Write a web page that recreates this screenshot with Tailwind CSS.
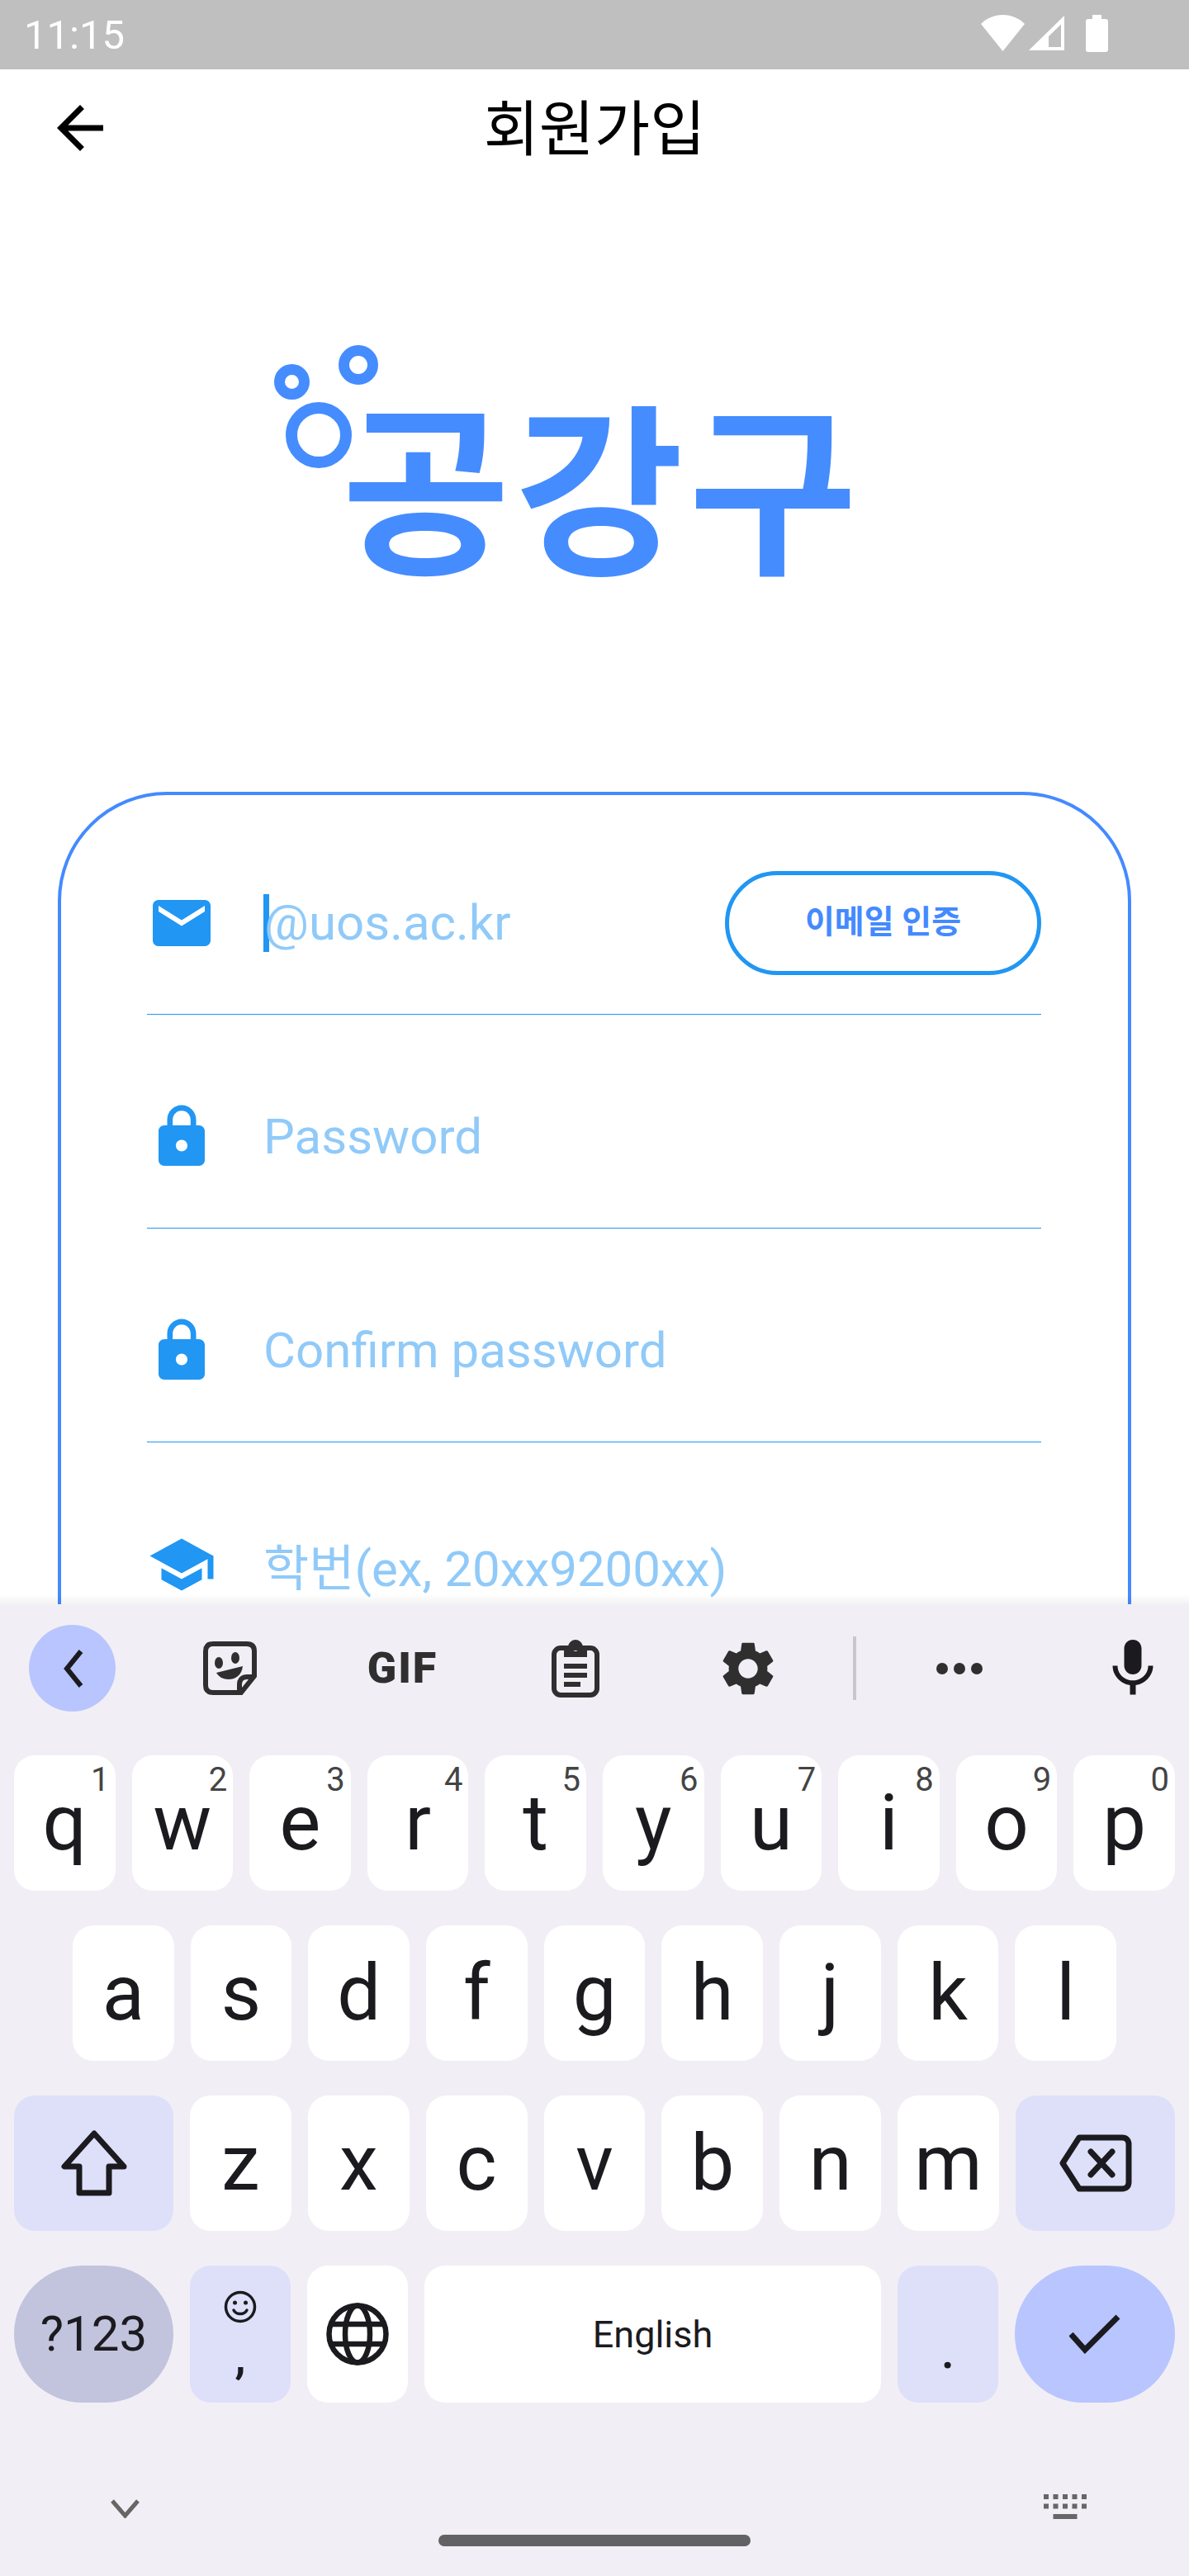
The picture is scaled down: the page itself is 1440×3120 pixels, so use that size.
<!DOCTYPE html>
<html lang="ko">
  <head>
    <meta charset="UTF-8" />
    <meta name="viewport" content="width=device-width, initial-scale=1.0" />
    <title>회원가입</title>
    <script src="https://cdn.jsdelivr.net/npm/@tailwindcss/browser@4"></script>
  </head>
  <body class="bg-white font-['Roboto','Noto_Sans_CJK_KR',sans-serif]">
    <div class="w-[1440px] h-[3120px] flex flex-col overflow-hidden">
      <!-- Status bar -->
      <div class="h-[84px] shrink-0 bg-[#bfbfbf] flex items-center pl-[29px] pr-[98px] text-white">
        <span class="text-[49px] leading-none">11:15</span>
        <div class="ml-auto flex items-start h-[46px] mt-[-3px]">
          <svg class="w-[53px] h-[44px]" viewBox="0 0 53 44" fill="#fff"><path d="M26.5 44L0 11C7 4 16 0 26.5 0S46 4 53 11z" /></svg>
          <svg class="w-[43px] h-[44px] ml-[5px]" viewBox="0 0 43 44" fill="#fff"><path fill-rule="evenodd" d="M43 1V43H0zM39 11.500V39H24V26z" /></svg>
          <svg class="w-[27px] h-[46px] ml-[26px]" viewBox="0 0 27 46" fill="#fff"><path d="M8 0H19V5H24C26 5 27 6 27 8V42C27 44 26 45 24 45H3C1 45 0 44 0 42V8C0 6 1 5 3 5H8z" /></svg>
        </div>
      </div>

      <!-- Form page -->
      <div class="relative flex-1 overflow-hidden">
        <header class="relative h-[142px] flex items-center justify-center">
          <svg class="absolute left-[55px] top-[29px] w-[84px] h-[84px]" viewBox="0 0 24 24" fill="#000"><path d="M20 11H7.830l5.590-5.590L12 4l-8 8 8 8 1.410-1.410L7.830 13H20v-2z" /></svg>
          <h1 class="text-[73px] leading-none text-black mt-[4px]">회원가입</h1>
        </header>

        <!-- Logo -->
        <div class="relative h-[733px] flex justify-center pl-[18px] pt-[265px]">
          <span class="text-[222px] leading-none font-bold text-[#458cff] tracking-[6px]">공강구</span>
          <div class="absolute left-[346px] top-[261px] w-[80px] h-[80px] rounded-full border-[14px] border-[#458cff]"></div>
          <div class="absolute left-[410px] top-[192px] w-[48px] h-[48px] rounded-full border-[13px] border-[#458cff]"></div>
          <div class="absolute left-[332px] top-[215px] w-[43px] h-[43px] rounded-full border-[13px] border-[#458cff]"></div>
        </div>

        <!-- Sign up card -->
        <div class="mx-[70px] h-[1400px] rounded-[132px] border-[4px] border-[#448aff] pt-[44px] pl-[104px] pr-[105px] flex flex-col gap-[37px]">
          <div class="relative h-[222px] shrink-0 flex items-center border-b border-[#2196f3]">
            <svg class="w-[84px] h-[84px]" viewBox="0 0 24 24" fill="#2196f3"><path d="M20 4H4c-1.100 0-1.990.900-1.990 2L2 18c0 1.100.900 2 2 2h16c1.100 0 2-.900 2-2V6c0-1.100-.900-2-2-2zm0 4l-8 5-8-5V6l8 5 8-5v2z" /></svg>
            <div class="w-[7px] h-[70px] bg-[#2196f3] ml-[57px]"></div>
            <span class="text-[60px] leading-none text-[#90caf9] ml-[-6px]">@uos.ac.kr</span>
            <button class="ml-auto w-[383px] h-[126px] rounded-full border-[5px] border-[#2196f3] text-[#448aff] text-[39px] leading-none font-bold">이메일 인증</button>
          </div>
          <div class="h-[222px] shrink-0 flex items-center border-b border-[#2196f3]">
            <svg class="w-[84px] h-[84px]" viewBox="0 0 24 24" fill="#2196f3"><path d="M18 8h-1V6c0-2.760-2.240-5-5-5S7 3.240 7 6v2H6c-1.100 0-2 .900-2 2v10c0 1.100.900 2 2 2h12c1.100 0 2-.900 2-2V10c0-1.100-.900-2-2-2zm-6 9c-1.100 0-2-.900-2-2s.900-2 2-2 2 .900 2 2-.900 2-2 2zm3.100-9H8.900V6c0-1.710 1.390-3.100 3.100-3.100 1.710 0 3.100 1.390 3.100 3.100v2z" /></svg>
            <span class="text-[60px] leading-none text-[#90caf9] ml-[57px]">Password</span>
          </div>
          <div class="h-[222px] shrink-0 flex items-center border-b border-[#2196f3]">
            <svg class="w-[84px] h-[84px]" viewBox="0 0 24 24" fill="#2196f3"><path d="M18 8h-1V6c0-2.760-2.240-5-5-5S7 3.240 7 6v2H6c-1.100 0-2 .900-2 2v10c0 1.100.900 2 2 2h12c1.100 0 2-.900 2-2V10c0-1.100-.900-2-2-2zm-6 9c-1.100 0-2-.900-2-2s.900-2 2-2 2 .900 2 2-.900 2-2 2zm3.100-9H8.900V6c0-1.710 1.390-3.100 3.100-3.100 1.710 0 3.100 1.390 3.100 3.100v2z" /></svg>
            <span class="text-[60px] leading-none text-[#90caf9] ml-[57px]">Confirm password</span>
          </div>
          <div class="h-[222px] shrink-0 flex items-center">
            <svg class="w-[84px] h-[84px]" viewBox="0 0 24 24" fill="#2196f3"><path d="M5 13.180v4L12 21l7-3.820v-4L12 17l-7-3.820zM12 3L1 9l11 6 9-4.910V17h2V9L12 3z" /></svg>
            <span class="text-[60px] leading-none text-[#90caf9] ml-[57px] mt-[12px]">학번(ex, 20xx9200xx)</span>
          </div>
        </div>

        <!-- soft edge above the keyboard -->
        <div class="absolute left-0 right-0 bottom-0 h-[12px] bg-gradient-to-b from-transparent to-black/5"></div>
      </div>

      <!-- Keyboard -->
      <div class="h-[1177px] shrink-0 bg-[#f1eff5] text-[#1b1b1f] flex flex-col">
        <!-- Toolbar -->
        <div class="h-[183px] shrink-0 flex items-center pl-[35px] pb-[28px]">
          <div class="w-[105px] h-[105px] rounded-full bg-[#b8c5ff] flex items-center justify-center">
            <svg class="w-[40px] h-[50px]" viewBox="0 0 40 50" fill="none" stroke="#1b1b1f" stroke-width="6"><path d="M30 4L13 25L30 46" /></svg>
          </div>
          <div class="w-[33px]"></div>
          <div class="w-[210px] flex justify-center">
            <svg class="w-[65px] h-[65px]" viewBox="0 0 65 65" fill="none" stroke="#2f2f2f" stroke-width="6">
              <path d="M12 3H53C59 3 62 6 62 12V42L46 62H12C6 62 3 59 3 53V12C3 6 6 3 12 3z" />
              <path d="M44 60V52C44 46 48 43 53 43H60" />
              <ellipse cx="19" cy="26" rx="5" ry="7" fill="#2f2f2f" stroke="none" />
              <ellipse cx="39" cy="20" rx="5" ry="7" fill="#2f2f2f" stroke="none" />
              <path d="M16 38L48 30C47 40 40 46 31 46C24 46 19 43 16 38z" fill="#2f2f2f" stroke="none" />
            </svg>
          </div>
          <div class="w-[209px] flex justify-center text-[#2f2f2f] text-[52px] leading-none font-black tracking-[2px]">GIF</div>
          <div class="w-[209px] flex justify-center">
            <svg class="w-[58px] h-[70px]" viewBox="0 0 58 70" fill="none" stroke="#2f2f2f" stroke-width="6">
              <rect x="3" y="10" width="52" height="57" rx="8" />
              <path fill-rule="evenodd" fill="#2f2f2f" stroke="none" d="M15 8H20C21 3 25 0 29 0S37 3 38 8H43V21H15zM29 7A3 3.500 0 1 0 29 14A3 3.500 0 1 0 29 7z" />
              <path d="M15 32H43M15 43H43M15 54H35" />
            </svg>
          </div>
          <div class="w-[209px] flex justify-center">
            <svg class="w-[78px] h-[78px]" viewBox="0 0 24 24" fill="#2f2f2f"><path d="M19.140 12.940c.040-.300.060-.610.060-.940 0-.320-.020-.640-.070-.940l2.030-1.580c.180-.140.230-.410.120-.610l-1.920-3.320c-.120-.220-.370-.290-.590-.220l-2.390.960c-.500-.380-1.030-.700-1.620-.940l-.360-2.540c-.040-.240-.240-.410-.480-.410h-3.840c-.240 0-.430.170-.470.410l-.360 2.540c-.590.240-1.130.570-1.620.940l-2.390-.960c-.220-.080-.470 0-.590.220L2.740 8.870c-.120.210-.080.470.120.610l2.030 1.580c-.050.300-.090.630-.090.940s.020.640.07.940l-2.030 1.580c-.180.140-.230.410-.12.610l1.920 3.320c.120.220.370.290.590.220l2.390-.960c.500.380 1.030.700 1.620.940l.360 2.540c.050.240.240.410.480.410h3.840c.240 0 .440-.170.470-.410l.360-2.540c.590-.240 1.130-.560 1.620-.940l2.390.960c.220.080.470 0 .590-.220l1.920-3.320c.120-.220.070-.470-.120-.610l-2.010-1.580zM12 15.600c-1.980 0-3.600-1.620-3.600-3.600s1.620-3.600 3.600-3.600 3.600 1.620 3.600 3.600-1.620 3.600-3.600 3.600z" /></svg>
          </div>
          <div class="w-[4px] h-[77px] bg-[#c8c8cc] ml-[23px]"></div>
          <div class="w-[250px] flex justify-center gap-[7px]">
            <div class="w-[14px] h-[14px] rounded-full bg-[#2f2f2f]"></div>
            <div class="w-[14px] h-[14px] rounded-full bg-[#2f2f2f]"></div>
            <div class="w-[14px] h-[14px] rounded-full bg-[#2f2f2f]"></div>
          </div>
          <svg class="w-[84px] h-[84px] ml-[43px]" viewBox="0 0 24 24" fill="#1b1b1f"><path d="M12 14c1.660 0 2.990-1.340 2.990-3L15 5c0-1.660-1.340-3-3-3S9 3.340 9 5v6c0 1.660 1.340 3 3 3zm5.300-3c0 3-2.540 5.100-5.300 5.100S6.700 14 6.700 11H5c0 3.410 2.720 6.230 6 6.720V21h2v-3.280c3.280-.480 6-3.300 6-6.720h-1.700z" /></svg>
        </div>

        <!-- Key rows -->
        <div class="flex gap-[20px] px-[17px] h-[164px] shrink-0 text-[94px] leading-none">
          <div class="relative flex-1 rounded-[25px] bg-white flex items-center justify-center">q<span class="absolute top-[10px] right-[7px] text-[40px] text-[#444]">1</span></div>
          <div class="relative flex-1 rounded-[25px] bg-white flex items-center justify-center">w<span class="absolute top-[10px] right-[7px] text-[40px] text-[#444]">2</span></div>
          <div class="relative flex-1 rounded-[25px] bg-white flex items-center justify-center">e<span class="absolute top-[10px] right-[7px] text-[40px] text-[#444]">3</span></div>
          <div class="relative flex-1 rounded-[25px] bg-white flex items-center justify-center">r<span class="absolute top-[10px] right-[7px] text-[40px] text-[#444]">4</span></div>
          <div class="relative flex-1 rounded-[25px] bg-white flex items-center justify-center">t<span class="absolute top-[10px] right-[7px] text-[40px] text-[#444]">5</span></div>
          <div class="relative flex-1 rounded-[25px] bg-white flex items-center justify-center">y<span class="absolute top-[10px] right-[7px] text-[40px] text-[#444]">6</span></div>
          <div class="relative flex-1 rounded-[25px] bg-white flex items-center justify-center">u<span class="absolute top-[10px] right-[7px] text-[40px] text-[#444]">7</span></div>
          <div class="relative flex-1 rounded-[25px] bg-white flex items-center justify-center">i<span class="absolute top-[10px] right-[7px] text-[40px] text-[#444]">8</span></div>
          <div class="relative flex-1 rounded-[25px] bg-white flex items-center justify-center">o<span class="absolute top-[10px] right-[7px] text-[40px] text-[#444]">9</span></div>
          <div class="relative flex-1 rounded-[25px] bg-white flex items-center justify-center">p<span class="absolute top-[10px] right-[7px] text-[40px] text-[#444]">0</span></div>
        </div>
        <div class="flex gap-[20px] px-[88px] h-[164px] mt-[42px] shrink-0 text-[94px] leading-none">
          <div class="flex-1 rounded-[25px] bg-white flex items-center justify-center">a</div>
          <div class="flex-1 rounded-[25px] bg-white flex items-center justify-center">s</div>
          <div class="flex-1 rounded-[25px] bg-white flex items-center justify-center">d</div>
          <div class="flex-1 rounded-[25px] bg-white flex items-center justify-center">f</div>
          <div class="flex-1 rounded-[25px] bg-white flex items-center justify-center">g</div>
          <div class="flex-1 rounded-[25px] bg-white flex items-center justify-center">h</div>
          <div class="flex-1 rounded-[25px] bg-white flex items-center justify-center">j</div>
          <div class="flex-1 rounded-[25px] bg-white flex items-center justify-center">k</div>
          <div class="flex-1 rounded-[25px] bg-white flex items-center justify-center">l</div>
        </div>
        <div class="flex gap-[20px] px-[17px] h-[164px] mt-[42px] shrink-0 text-[94px] leading-none">
          <div class="w-[193px] shrink-0 rounded-[25px] bg-[#dee0fa] flex items-center justify-center">
            <svg class="w-[84px] h-[84px]" viewBox="0 0 84 84" fill="none" stroke="#1b1b1f" stroke-width="7" stroke-linejoin="round"><path d="M42 6L6 46H24V78H60V46H78z" /></svg>
          </div>
          <div class="flex-1 rounded-[25px] bg-white flex items-center justify-center">z</div>
          <div class="flex-1 rounded-[25px] bg-white flex items-center justify-center">x</div>
          <div class="flex-1 rounded-[25px] bg-white flex items-center justify-center">c</div>
          <div class="flex-1 rounded-[25px] bg-white flex items-center justify-center">v</div>
          <div class="flex-1 rounded-[25px] bg-white flex items-center justify-center">b</div>
          <div class="flex-1 rounded-[25px] bg-white flex items-center justify-center">n</div>
          <div class="flex-1 rounded-[25px] bg-white flex items-center justify-center">m</div>
          <div class="w-[193px] shrink-0 rounded-[25px] bg-[#dee0fa] flex items-center justify-center">
            <svg class="w-[88px] h-[70px]" viewBox="0 0 88 70" fill="none" stroke="#1b1b1f" stroke-width="7" stroke-linejoin="round" stroke-linecap="round"><path d="M24 4H76C81 4 84 7 84 12V58C84 63 81 66 76 66H24L4 35z" /><path d="M38 21L64 49M64 21L38 49" /></svg>
          </div>
        </div>
        <div class="flex gap-[20px] px-[17px] h-[166px] mt-[42px] shrink-0 leading-none">
          <div class="w-[193px] shrink-0 rounded-full bg-[#c2c4de] flex items-center justify-center text-[60px]">?123</div>
          <div class="w-[122px] shrink-0 rounded-[25px] bg-[#dee0fa] flex flex-col items-center pt-[30px]">
            <svg class="w-[40px] h-[40px]" viewBox="0 0 40 40" fill="none" stroke="#1b1b1f" stroke-width="3.500" stroke-linecap="round">
              <circle cx="20" cy="20" r="17.500" />
              <path d="M12 24C15 30 25 30 28 24" />
              <circle cx="13.500" cy="15" r="2.500" fill="#1b1b1f" stroke="none" />
              <circle cx="26.500" cy="15" r="2.500" fill="#1b1b1f" stroke="none" />
            </svg>
            <span class="text-[60px] mt-[10px] font-medium">,</span>
          </div>
          <div class="w-[122px] shrink-0 rounded-[25px] bg-white flex items-center justify-center">
            <svg class="w-[76px] h-[76px]" viewBox="0 0 76 76" fill="none" stroke="#1b1b1f" stroke-width="6.500">
              <circle cx="38" cy="38" r="34.500" />
              <ellipse cx="38" cy="38" rx="15" ry="34.500" />
              <path d="M5 26H71M5 50H71" />
            </svg>
          </div>
          <div class="flex-1 rounded-[25px] bg-white flex items-center justify-center text-[45px]">English</div>
          <div class="w-[122px] shrink-0 rounded-[25px] bg-[#dee0fa] flex items-end justify-center pb-[30px] text-[72px]">.</div>
          <div class="w-[194px] shrink-0 rounded-full bg-[#b8c5ff] flex items-center justify-center">
            <svg class="w-[62px] h-[48px]" viewBox="0 0 62 48" fill="none" stroke="#1b1b1f" stroke-width="7"><path d="M2 24L19 43L59 3" /></svg>
          </div>
        </div>

        <!-- Bottom bar -->
        <div class="relative flex-1 flex items-start justify-between pl-[134px] pr-[124px] pt-[111px]">
          <svg class="w-[35px] h-[24px] mt-[5px]" viewBox="0 0 35 24" fill="none" stroke="#666" stroke-width="5"><path d="M2 3L17.500 21L33 3" /></svg>
          <svg class="w-[52px] h-[30px]" viewBox="0 0 52 30" fill="#666">
            <path d="M0 0h6v6H0zM11.500 0h6v6h-6zM23 0h6v6h-6zM34.500 0h6v6h-6zM46 0h6v6h-6zM0 11.500h6v6H0zM11.500 11.500h6v6h-6zM23 11.500h6v6h-6zM34.500 11.500h6v6h-6zM46 11.500h6v6h-6zM11.500 24h29v6h-29z" />
          </svg>
          <div class="absolute left-[531px] bottom-[36px] w-[378px] h-[14px] rounded-full bg-[#626265]"></div>
        </div>
      </div>
    </div>
  </body>
</html>
